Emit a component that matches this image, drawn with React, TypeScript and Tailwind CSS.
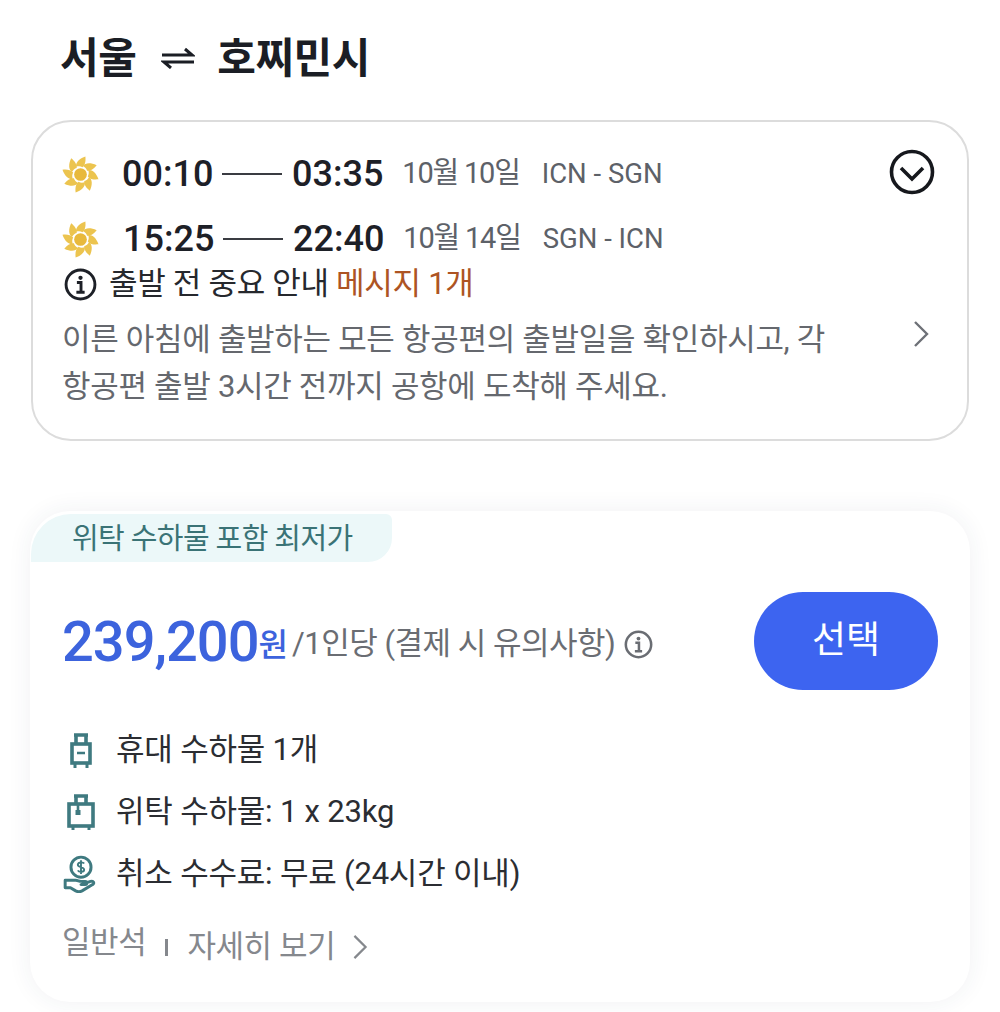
const FONT = "font-['Roboto','Noto_Sans_CJK_KR',sans-serif]";

function Sun() {
  const petals = [0, 45, 90, 135, 180, 225, 270, 315];
  return (
    <svg width="37" height="37" viewBox="0 0 38 38" className="shrink-0">
      {petals.map((a) => (
        <path key={a} d="M14.500 11 C14 7 17 3 24 0.500 C24.500 5 24 9 21 11.500 C19 10.300 17 10.300 14.500 11 Z" fill="#ecc44f" transform={`rotate(${a} 19 19)`} />
      ))}
      <circle cx="19" cy="19" r="6.500" fill="#e8b93c" />
    </svg>
  );
}

function FlightRow({ from, to, date, route, pad }: { from: string; to: string; date: string; route: string; pad: string }) {
  return (
    <div className="flex items-center h-[40px]">
      <Sun />
      <span className={`text-[36px] font-medium text-[#1d2027] w-[92px] ${pad}`}>{from}</span>
      <span className="w-[60px] h-[2px] bg-[#3a3c42] ml-[8px] mr-[10px]" />
      <span className="text-[36px] font-medium text-[#1d2027]">{to}</span>
      <span className="text-[29px] text-[#5d6168] ml-[19px] tracking-[-1.2px]">{date}</span>
      <span className="text-[27.5px] text-[#5d6168] ml-[22px]">{route}</span>
    </div>
  );
}

function InfoIcon({ size, color }: { size: number; color: string }) {
  return (
    <svg width={size} height={size} viewBox="0 0 32 32" fill="none" className="shrink-0">
      <circle cx="16" cy="16" r="14" stroke={color} strokeWidth="2.800" />
      <circle cx="16" cy="9.500" r="2.100" fill={color} />
      <path d="M12.500 14h4v9M12 23.500h8" stroke={color} strokeWidth="2.800" />
    </svg>
  );
}

function CarryOn() {
  return (
    <svg width="24" height="35" viewBox="0 0 24 35" fill="none" stroke="#3f7a80" strokeWidth="3.600">
      <path d="M5 2h14M7 2v9M17 2v9" />
      <rect x="3" y="11" width="18" height="19" />
      <path d="M8 20h8" strokeWidth="2.600" />
      <path d="M6 31v4M18 31v4" strokeWidth="3" />
    </svg>
  );
}

function Checked() {
  return (
    <svg width="30" height="36" viewBox="0 0 30 36" fill="none" stroke="#3f7a80" strokeWidth="3.600">
      <path d="M8 2h14M10 2v8M20 2v8" />
      <rect x="3" y="10" width="24" height="22" />
      <path d="M12 10v8" strokeWidth="2.600" />
      <rect x="9.500" y="16" width="5" height="5" fill="#3f7a80" stroke="none" />
      <path d="M7 33v3M23 33v3" strokeWidth="3" />
    </svg>
  );
}

function Refund() {
  return (
    <svg width="36" height="38" viewBox="0 0 34 36" fill="none" stroke="#3f7a80" strokeWidth="2.800">
      <circle cx="17" cy="11.500" r="9.500" />
      <path d="M20 8c-1-1.500-5.500-1.500-6 1-.5 3 6 2 6 5 0 2.500-5 2.500-6 .5M17 5v13" strokeWidth="1.800" />
      <path d="M2 24h10c2 0 3 1 5 1h4c2 0 2 3 0 3h-4l9-3c3-1 4 2 2 3l-10 6c-2 1-4 1-6 0l-5-3H2z" strokeLinejoin="round" />
    </svg>
  );
}

function Chevron({ w, h, color }: { w: number; h: number; color: string }) {
  return (
    <svg width={w} height={h} viewBox="0 0 16 28" fill="none" stroke={color} strokeWidth="2.400">
      <path d="M2 2l12 12L2 26" />
    </svg>
  );
}

function Feature({ icon, label }: { icon: React.ReactNode; label: string }) {
  return (
    <div className="flex items-center h-[62px]">
      <span className="w-[36px] flex justify-center shrink-0">{icon}</span>
      <span className="ml-[17px] text-[31px] text-[#2b2d32] tracking-[-0.2px]">{label}</span>
    </div>
  );
}

export default function App() {
  return (
    <div className={`w-[1000px] h-[1012px] bg-white overflow-hidden px-[30px] ${FONT}`}>
      <h1 className="flex items-center h-[120px] pl-[30px] pb-[4px] text-[42px] font-bold text-[#1b1e25] tracking-[-0.5px]">
        서울
        <svg width="34" height="22" viewBox="0 0 34 22" fill="none" stroke="#1b1e25" strokeWidth="3" className="ml-[25px] mr-[22px]">
          <path d="M1 8h30L24 2" />
          <path d="M33 15H3l7 6" />
        </svg>
        호찌민시
      </h1>

      <section className="relative h-[321px] mx-[1px] border-2 border-[#dcdcdc] rounded-[40px] pl-[29px] pt-[32px]">
        <FlightRow from="00:10" to="03:35" date="10월 10일" route="ICN - SGN" pad="ml-[23px]" />
        <div className="h-[25px]" />
        <FlightRow from="15:25" to="22:40" date="10월 14일" route="SGN - ICN" pad="ml-[24px]" />
        <div className="flex items-center gap-[12px] h-[48px] ml-[2px] mt-[1px]">
          <InfoIcon size={33} color="#1d2027" />
          <span className="text-[31px] text-[#26282d] tracking-[-0.3px]">
            출발 전 중요 안내 <span className="text-[#ad5423]">메시지 1개</span>
          </span>
        </div>
        <p className="mt-[8px] text-[31px] leading-[47px] text-[#65686e] tracking-[-0.3px] whitespace-nowrap">
          이른 아침에 출발하는 모든 항공편의 출발일을 확인하시고, 각
          <br />
          항공편 출발 3시간 전까지 공항에 도착해 주세요.
        </p>
        <span className="absolute right-[38px] top-[198px]">
          <Chevron w={16} h={28} color="#6e7177" />
        </span>
        <svg width="46" height="46" viewBox="0 0 46 46" fill="none" stroke="#16181d" strokeWidth="3.600" className="absolute right-[32px] top-[27px]">
          <circle cx="23" cy="23" r="20.500" />
          <path d="M12 19l11 11 11-11" />
        </svg>
      </section>

      <section className="mt-[70px] h-[491px] bg-white rounded-[40px] shadow-[0_0_24px_rgba(40,60,90,0.07)] overflow-hidden">
        <div className="w-[361px] h-[48px] mt-[3px] ml-[1px] pt-[3px] bg-[#ecf8f9] rounded-tl-[40px] rounded-tr-[6px] rounded-br-[24px] flex items-center pl-[41px] text-[29px] text-[#3a7376] tracking-[-0.6px]">
          위탁 수하물 포함 최저가
        </div>
        <div className="flex items-center justify-between h-[98px] mt-[30px] pl-[32px] pr-[32px]">
          <div className="flex items-center pt-[1px]">
            <span className="text-[56px] font-medium text-[#3c63dd] tracking-[-1px]">239,200</span>
            <span className="text-[32px] font-medium text-[#3c63dd] mt-[6px]">원</span>
            <span className="text-[31px] text-[#6a6d73] mt-[6px] tracking-[-0.5px] ml-[4px]">/1인당 (결제 시 유의사항)</span>
            <span className="ml-[9px] mt-[6px]"><InfoIcon size={29} color="#6a6d73" /></span>
          </div>
          <button className="w-[184px] h-[98px] rounded-full bg-[#3d64f0] text-white text-[37px] font-normal">선택</button>
        </div>
        <div className="mt-[29px] pl-[33px]">
          <Feature icon={<CarryOn />} label="휴대 수하물 1개" />
          <Feature icon={<Checked />} label="위탁 수하물: 1 x 23kg" />
          <Feature icon={<Refund />} label="취소 수수료: 무료 (24시간 이내)" />
        </div>
        <div className="flex items-center mt-[19px] pl-[32px] text-[31px] text-[#85888d]">
          <span className="-mt-[8px] tracking-[-0.4px]">일반석</span>
          <span className="w-[3px] h-[17px] bg-[#85888d] mx-[19px]" />
          <span className="tracking-[-0.4px]">자세히 보기</span>
          <span className="ml-[17px]"><Chevron w={16} h={26} color="#85888d" /></span>
        </div>
      </section>
    </div>
  );
}
